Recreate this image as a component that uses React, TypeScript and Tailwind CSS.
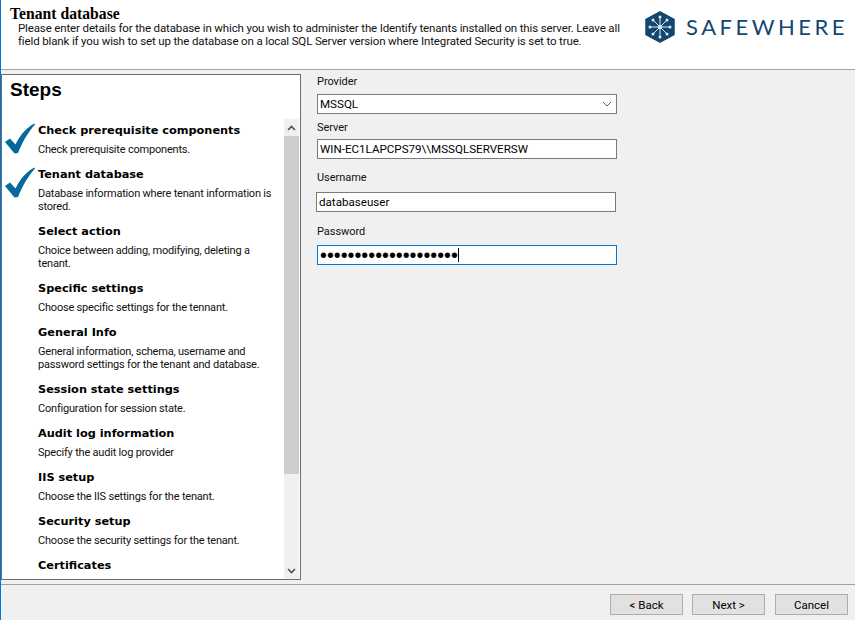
import React from 'react';

const steps = [
  { title: 'Check prerequisite components', desc: ['Check prerequisite components.'], done: true },
  { title: 'Tenant database', desc: ['Database information where tenant information is', 'stored.'], done: true },
  { title: 'Select action', desc: ['Choice between adding, modifying, deleting a', 'tenant.'] },
  { title: 'Specific settings', desc: ['Choose specific settings for the tennant.'] },
  { title: 'General Info', desc: ['General information, schema, username and', 'password settings for the tenant and database.'] },
  { title: 'Session state settings', desc: ['Configuration for session state.'] },
  { title: 'Audit log information', desc: ['Specify the audit log provider'] },
  { title: 'IIS setup', desc: ['Choose the IIS settings for the tenant.'] },
  { title: 'Security setup', desc: ['Choose the security settings for the tenant.'] },
  { title: 'Certificates', desc: [] as string[] },
];

const CheckMark = () => (
  <svg width="31" height="31" viewBox="0 0 31 31" className="block">
    <path d="M0 19 L5 15.5 L10.5 21.5 C15 12 22 4 29.5 0.5 L30 1.5 C23 9 17 20 13 30 L9.5 30.5 Z" fill="#06699d" />
  </svg>
);

const Logo = () => (
  <svg width="30" height="32" viewBox="0 0 30 32" className="block shrink-0">
    <path d="M15 1 L29 8.5 V23.5 L15 31 L1 23.5 V8.5 Z" fill="#12476f" stroke="#12476f" strokeWidth="1.5" strokeLinejoin="round" />
    <path d="M15 16 V6 M15 16 V26 M15 16 H5 M15 16 H25 M15 16 L8 9 M15 16 L22 9 M15 16 L8 23 M15 16 L22 23" stroke="#dfe8ef" strokeWidth="1" />
    <g fill="#dfe8ef">
      <circle cx="15" cy="6" r="1.5" />
      <circle cx="15" cy="26" r="1.5" />
      <circle cx="5" cy="16" r="1.5" />
      <circle cx="25" cy="16" r="1.5" />
      <circle cx="8" cy="9" r="1.5" />
      <circle cx="22" cy="9" r="1.5" />
      <circle cx="8" cy="23" r="1.5" />
      <circle cx="22" cy="23" r="1.5" />
      <circle cx="15" cy="16" r="2" />
    </g>
  </svg>
);

const label = "h-[15px] text-[11px] leading-[15px] tracking-[-0.05px] text-[#111]";
const field = "h-[20px] w-[300px] border border-[#7a7a7a] bg-white px-[2px] text-[11.6px] leading-[18px] text-black";
const button = "h-[21px] w-[73px] border border-[#adadad] bg-[#e1e1e1] text-center text-[11.5px] leading-[21px] text-black";

export default function App() {
  return (
    <div className="flex h-[620px] w-[855px] flex-col overflow-hidden border-l border-[#0078d7] bg-[#f0f0f0] font-['Roboto',sans-serif]">
      {/* Header */}
      <div className="flex h-[70px] shrink-0 justify-between border-b border-[#a0a0a0] bg-white">
        <div className="min-w-0 pl-[9px] pt-[6px]">
          <div className="h-[16px] font-['Liberation_Serif',serif] text-[15.7px] font-bold leading-[16px] text-black">Tenant database</div>
          <div className="whitespace-nowrap pl-[8px] text-[11.5px] leading-[13px] tracking-[-0.14px] text-[#111]">
            <div>Please enter details for the database in which you wish to administer the Identify tenants installed on this server. Leave all</div>
            <div>field blank if you wish to set up the database on a local SQL Server version where Integrated Security is set to true.</div>
          </div>
        </div>
        <div className="flex shrink-0 items-start gap-[11px] pr-[7px] pt-[11px]">
          <Logo />
          <span className="whitespace-nowrap font-['Lato',sans-serif] text-[22px] leading-[32px] tracking-[3.5px] text-[#12476f]">SAFEWHERE</span>
        </div>
      </div>

      {/* Body */}
      <div className="flex min-h-0 flex-1 pt-[4px]">
        <div className="flex h-[506px] w-[300px] shrink-0 flex-col border border-[#6d6d6d] bg-white">
          <div className="h-[44px] shrink-0 pl-[8px] pt-[2px] font-['Liberation_Sans',sans-serif] text-[19px] font-bold leading-[26px] text-black">Steps</div>
          <div className="flex min-h-0 flex-1">
            <div className="min-w-0 flex-1 overflow-hidden pt-[3px]">
              {steps.map((s) => (
                <div key={s.title} className="flex pb-[10px]">
                  <div className="w-[36px] shrink-0 pl-[3px] pt-[1px]">{s.done && <CheckMark />}</div>
                  <div className="min-w-0">
                    <div className="h-[21px] whitespace-nowrap font-['DejaVu_Sans',sans-serif] text-[11.3px] font-bold leading-[18px] text-black">{s.title}</div>
                    {s.desc.map((d) => (
                      <div key={d} className="h-[13px] whitespace-nowrap text-[11px] leading-[13px] tracking-[-0.2px] text-[#111]">{d}</div>
                    ))}
                  </div>
                </div>
              ))}
            </div>
            <div className="mr-px flex w-[15px] shrink-0 flex-col bg-[#f0f0f0]">
              <div className="flex h-[17px] shrink-0 items-center justify-center text-[#505050]">
                <svg width="9" height="6" viewBox="0 0 9 6"><path d="M1 5 L4.5 1.5 L8 5" fill="none" stroke="currentColor" strokeWidth="1.6" /></svg>
              </div>
              <div className="h-[338px] shrink-0 bg-[#cdcdcd]" />
              <div className="flex-1" />
              <div className="flex h-[17px] shrink-0 items-center justify-center text-[#505050]">
                <svg width="9" height="6" viewBox="0 0 9 6"><path d="M1 1 L4.5 4.5 L8 1" fill="none" stroke="currentColor" strokeWidth="1.6" /></svg>
              </div>
            </div>
          </div>
        </div>

        <div className="pl-[16px]">
          <div className={label}>Provider</div>
          <div className={`${field} mt-[5px] flex items-center justify-between`}>
            <span>MSSQL</span>
            <svg width="10" height="6" viewBox="0 0 10 6" className="mr-[2px]"><path d="M1 1 L5 5 L9 1" fill="none" stroke="#606060" strokeWidth="1" /></svg>
          </div>
          <div className={`${label} mt-[6px]`}>Server</div>
          <div className={`${field} mt-[4px]`}>WIN-EC1LAPCPS79\\MSSQLSERVERSW</div>
          <div className={`${label} mt-[11px]`}>Username</div>
          <div className={`${field} -ml-px mt-[7px]`}>databaseuser</div>
          <div className={`${label} mt-[12px]`}>Password</div>
          <div className={`${field} mt-[6px] flex items-center border-[#0078d7]`}>
            <span className="font-['Liberation_Sans',sans-serif] text-[19.7px] leading-[18px]">••••••••••••••••••••</span>
            <span className="h-[14px] w-px bg-black" />
          </div>
        </div>
      </div>

      {/* Footer */}
      <div className="flex h-[36px] shrink-0 items-start justify-end border-t border-[#a0a0a0] pr-[7px] pt-[9px]">
        <div className={button}>&lt; Back</div>
        <div className={`${button} ml-[9px]`}>Next &gt;</div>
        <div className={`${button} ml-[10px]`}>Cancel</div>
      </div>
    </div>
  );
}
